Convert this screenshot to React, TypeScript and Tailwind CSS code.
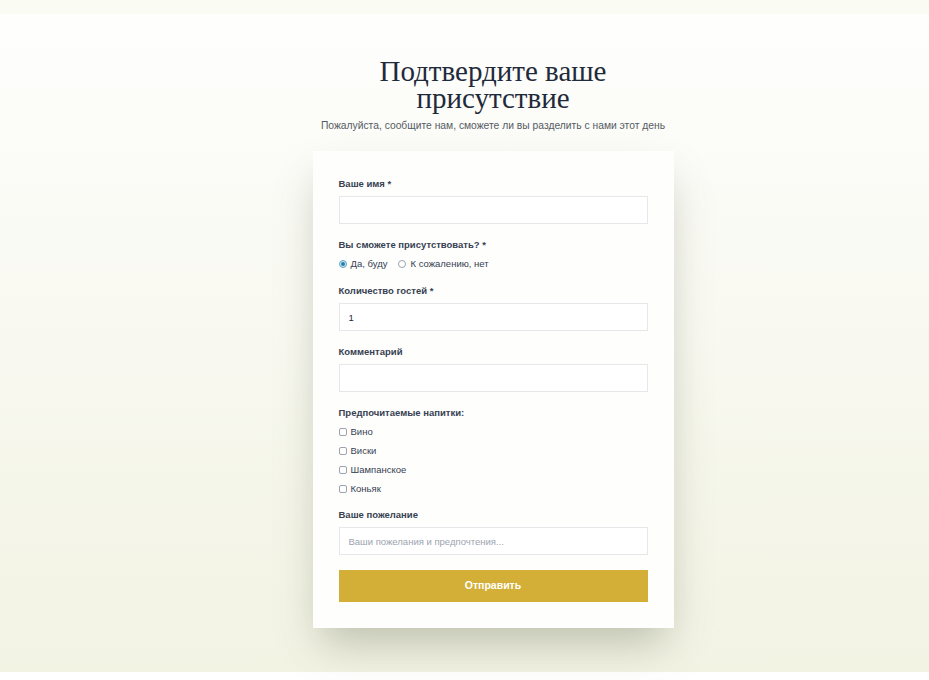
import { useState } from "react";

const sans = "font-['Liberation_Sans','Inter',sans-serif]";

function Field({ label, children, className = "" }: { label: string; children: React.ReactNode; className?: string }) {
  return (
    <div className={className}>
      <div className="mb-[5px] h-[14px] text-[9.5px] font-semibold leading-[14px] text-[#374151]">{label}</div>
      {children}
    </div>
  );
}

function TextInput({ value, placeholder }: { value?: string; placeholder?: string }) {
  return (
    <input
      defaultValue={value}
      placeholder={placeholder}
      className="block h-[28px] w-full border border-[#e5e7eb] bg-white px-[9px] text-[9.5px] text-[#1f2937] outline-none placeholder:text-[#9ca3af]"
    />
  );
}

function Radio({ on }: { on: boolean }) {
  return (
    <span
      className={`flex h-[8px] w-[8px] items-center justify-center rounded-full border ${
        on ? "border-[#5aa7c8] bg-[#cfe7f1]" : "border-[#9ca3af] bg-white"
      }`}
    >
      {on && <span className="h-[4px] w-[4px] rounded-full bg-[#2a7fa8]" />}
    </span>
  );
}

export default function App() {
  const [attend, setAttend] = useState(true);
  const drinks = ["Вино", "Виски", "Шампанское", "Коньяк"];

  return (
    <div className={`min-h-[680px] bg-white ${sans}`}>
      {/* top strip */}
      <div className="h-[14px] bg-[#fafbf3]" />

      <section className="flex h-[658px] flex-col items-center bg-gradient-to-b from-[#fefefd] to-[#f2f3e3] pl-[57px] pt-[44px]">
        <h1 className="text-center font-['Liberation_Serif',serif] text-[29px] font-normal leading-[27px] text-[#1f2a3a]">
          Подтвердите ваше
          <br />
          присутствие
        </h1>
        <p className="mt-[7px] text-[10.3px] leading-[14px] text-[#555b63]">
          Пожалуйста, сообщите нам, сможете ли вы разделить с нами этот день
        </p>

        {/* Card */}
        <form className="mt-[18px] w-[361px] bg-[#fefefd] p-[26px] shadow-[0_22px_40px_-8px_rgba(90,95,70,0.35)]">
          <Field label="Ваше имя *" className="mb-[14px]">
            <TextInput />
          </Field>

          <Field label="Вы сможете присутствовать? *" className="mb-[13px]">
            <div className="flex h-[14px] items-center text-[9.5px] text-[#374151]">
              <button type="button" onClick={() => setAttend(true)} className="flex items-center">
                <Radio on={attend} />
                <span className="ml-[4px]">Да, буду</span>
              </button>
              <button type="button" onClick={() => setAttend(false)} className="ml-[11px] flex items-center">
                <Radio on={!attend} />
                <span className="ml-[4px]">К сожалению, нет</span>
              </button>
            </div>
          </Field>

          <Field label="Количество гостей *" className="mb-[14px]">
            <TextInput value="1" />
          </Field>

          <Field label="Комментарий" className="mb-[14px]">
            <TextInput />
          </Field>

          <Field label="Предпочитаемые напитки:" className="mb-[12px]">
            <div className="flex flex-col gap-[5px]">
              {drinks.map((d) => (
                <label key={d} className="flex h-[14px] items-center text-[9.5px] text-[#374151]">
                  <span className="h-[8px] w-[8px] rounded-[2px] border border-[#9ca3af] bg-white" />
                  <span className="ml-[4px]">{d}</span>
                </label>
              ))}
            </div>
          </Field>

          <Field label="Ваше пожелание" className="mb-[15px]">
            <TextInput placeholder="Ваши пожелания и предпочтения..." />
          </Field>

          <button type="button" className="block h-[32px] w-full bg-[#d4af37] text-[10.5px] font-bold text-white">
            Отправить
          </button>
        </form>
      </section>
    </div>
  );
}
